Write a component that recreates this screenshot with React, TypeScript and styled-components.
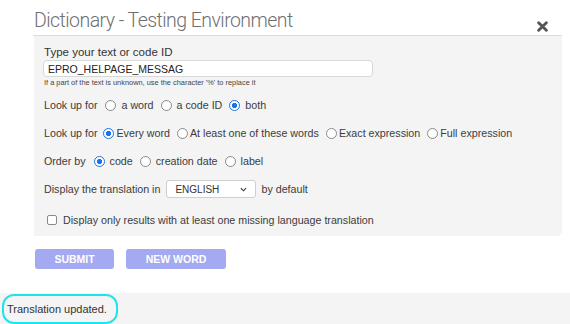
import React from 'react';
import styled, { createGlobalStyle } from 'styled-components';

const GlobalStyle = createGlobalStyle`
  body {
    margin: 0;
    background: #fff;
    font-family: 'Liberation Sans', Arial, sans-serif;
    color: #3a3a3a;
  }
`;

type Choice = { label: string; checked?: boolean };

const lookupKinds: Choice[] = [
  { label: 'a word' },
  { label: 'a code ID' },
  { label: 'both', checked: true },
];

const lookupModes: Choice[] = [
  { label: 'Every word', checked: true },
  { label: 'At least one of these words' },
  { label: 'Exact expression' },
  { label: 'Full expression' },
];

const orders: Choice[] = [
  { label: 'code', checked: true },
  { label: 'creation date' },
  { label: 'label' },
];

const RadioGroup: React.FC<{ name: string; title: string; items: Choice[]; tight?: boolean }> = ({
  name,
  title,
  items,
  tight,
}) => (
  <Row>
    <RowLabel tight={tight}>{title}</RowLabel>
    {items.map((item) => (
      <Option key={item.label} tight={tight}>
        <Radio type="radio" name={name} defaultChecked={item.checked} />
        {item.label}
      </Option>
    ))}
  </Row>
);

const App: React.FC = () => {
  return (
    <>
      <GlobalStyle />
      <Page>
        <Header>
          <Title>Dictionary - Testing Environment</Title>
          <CloseIcon viewBox="0 0 10 10">
            <path d="M1.5 1.5 L8.5 8.5 M8.5 1.5 L1.5 8.5" stroke="#555" strokeWidth="2.6" strokeLinecap="round" />
          </CloseIcon>
        </Header>
        <Panel>
          <FieldLabel>Type your text or code ID</FieldLabel>
          <TextInput defaultValue="EPRO_HELPAGE_MESSAG" />
          <Hint>If a part of the text is unknown, use the character '%' to replace it</Hint>
          <Options>
            <RadioGroup name="kind" title="Look up for" items={lookupKinds} />
            <RadioGroup name="mode" title="Look up for" items={lookupModes} tight />
            <RadioGroup name="order" title="Order by" items={orders} />
            <Row>
              <span>Display the translation in</span>
              <SelectBox>
                ENGLISH
                <Chevron viewBox="0 0 8 5">
                  <path d="M1 1 L4 4 L7 1" fill="none" stroke="#333" strokeWidth="1.2" />
                </Chevron>
              </SelectBox>
              <span>by default</span>
            </Row>
          </Options>
          <CheckRow>
            <Checkbox type="checkbox" />
            Display only results with at least one missing language translation
          </CheckRow>
        </Panel>
        <Actions>
          <Button width={79}>SUBMIT</Button>
          <Button width={100}>NEW WORD</Button>
        </Actions>
      </Page>
      <StatusBar>
        <StatusText>Translation updated.</StatusText>
      </StatusBar>
    </>
  );
};

const Page = styled.div`
  padding: 0 8px 0 34px;
  height: 293px;
  box-sizing: border-box;
`;

const Header = styled.div`
  display: flex;
  align-items: center;
  justify-content: space-between;
  height: 35px;
  margin-left: -1px;
  padding-left: 1px;
  border-bottom: 1px solid #dcdcdc;
`;

const Title = styled.h1`
  margin: 0;
  padding-top: 6px;
  font-family: Roboto, 'Liberation Sans', sans-serif;
  font-weight: 300;
  font-size: 19.5px;
  color: #6f6f6f;
  letter-spacing: -0.55px;
`;

const CloseIcon = styled.svg`
  width: 11px;
  height: 11px;
  margin: 17px 14px 0 0;
`;

const Panel = styled.div`
  background: #f4f4f4;
  padding: 10px 10px 0 10px;
  height: 200px;
  box-sizing: border-box;
  border-radius: 0 0 5px 0;
  font-size: 10.7px;
`;

const FieldLabel = styled.div`
  font-size: 11.5px;
  line-height: 13px;
  color: #333;
`;

const TextInput = styled.input`
  display: block;
  box-sizing: border-box;
  width: 330px;
  height: 17px;
  margin: 1px 0 0 -1px;
  padding: 0 4px;
  border: 1px solid #d8d8d8;
  border-radius: 4px;
  background: #fff;
  font-family: 'Liberation Sans', Arial, sans-serif;
  font-size: 10.5px;
  color: #222;
  outline: none;
`;

const Hint = styled.div`
  font-size: 7.4px;
  line-height: 9px;
  margin-top: 1px;
  color: #444;
`;

const Options = styled.div`
  margin-top: 4px;
`;

const Row = styled.div`
  display: flex;
  align-items: center;
  height: 28px;
  color: #3c3c3c;
`;

const RowLabel = styled.span<{ tight?: boolean }>`
  margin-right: ${(p) => (p.tight ? 6 : 8)}px;
`;

const Option = styled.label<{ tight?: boolean }>`
  display: inline-flex;
  align-items: center;
  gap: ${(p) => (p.tight ? 2 : 5)}px;
  margin-right: 7px;
`;

const Radio = styled.input`
  appearance: none;
  margin: 0;
  width: 11px;
  height: 11px;
  border-radius: 50%;
  border: 1px solid #8a8a8a;
  background: #fff;
  box-sizing: border-box;
  &:checked {
    border: 1.5px solid #1a73e8;
    background: radial-gradient(circle, #1a73e8 0 2.4px, #fff 2.9px);
  }
`;

const SelectBox = styled.div`
  position: relative;
  box-sizing: border-box;
  width: 90px;
  height: 18px;
  margin: 0 5px 0 6px;
  padding: 0 0 0 8px;
  display: flex;
  align-items: center;
  background: #fff;
  border: 1px solid #cfcfcf;
  border-radius: 3px;
  font-size: 10px;
  color: #333;
`;

const Chevron = styled.svg`
  position: absolute;
  right: 8px;
  top: 6px;
  width: 7px;
  height: 5px;
`;

const CheckRow = styled.label`
  display: flex;
  align-items: center;
  gap: 6px;
  margin: 8px 0 0 3px;
  height: 18px;
  color: #3c3c3c;
`;

const Checkbox = styled.input`
  appearance: none;
  margin: 0;
  width: 10px;
  height: 10px;
  border: 1px solid #8a8a8a;
  border-radius: 2px;
  background: #fff;
  box-sizing: border-box;
`;

const Actions = styled.div`
  display: flex;
  gap: 12px;
  margin: 13px 0 0 1px;
`;

const Button = styled.button<{ width: number }>`
  width: ${(p) => p.width}px;
  height: 20px;
  border: none;
  border-radius: 3px;
  background: #a3aaf1;
  color: #fff;
  font-family: 'Liberation Sans', Arial, sans-serif;
  font-weight: 700;
  font-size: 10.5px;
  padding: 0;
`;

const StatusBar = styled.div`
  height: 31px;
  background: #f4f4f4;
  display: flex;
  align-items: center;
  padding-left: 2px;
`;

const StatusText = styled.div`
  box-sizing: border-box;
  height: 30px;
  width: 116px;
  padding-left: 3px;
  display: flex;
  align-items: center;
  border: 2px solid #1fe3ee;
  border-radius: 12px;
  font-size: 11px;
  color: #333;
`;

export default App;
